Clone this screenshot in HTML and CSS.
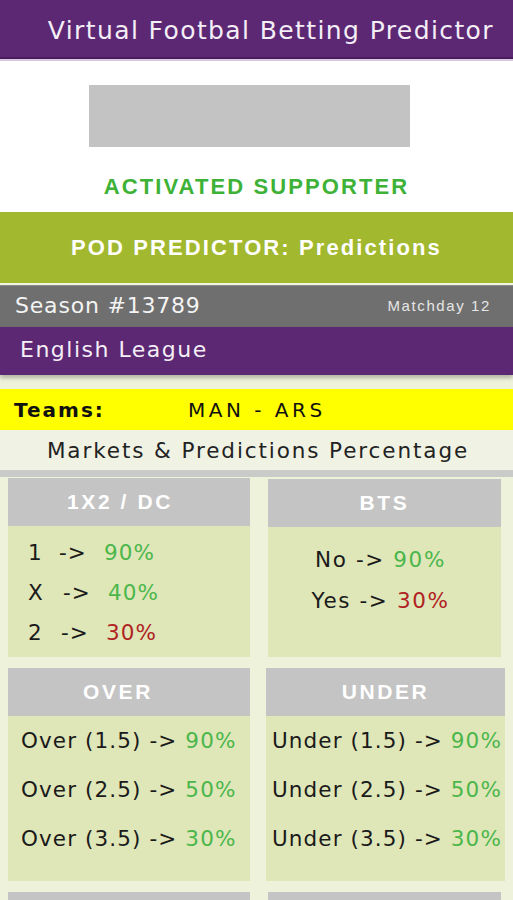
FILE: index.html
```html
<!DOCTYPE html>
<html>
<head>
<meta charset="utf-8">
<link rel="stylesheet" href="styles.css">
</head>
<body>
<header class="topbar"><h1 class="title">Virtual Footbal Betting Predictor</h1></header>
<section class="promo">
  <div class="banner"></div>
  <p class="status">ACTIVATED SUPPORTER</p>
</section>
<div class="podbar">POD PREDICTOR: Predictions</div>
<div class="season"><span class="season-name">Season #13789</span><span class="matchday">Matchday 12</span></div>
<div class="league">English League</div>
<div class="teams"><span class="teams-label">Teams:</span><span class="teams-value">MAN - ARS</span></div>
<div class="markets">Markets &amp; Predictions Percentage</div>
<div class="divider"></div>
<main class="grid">
  <div class="card card-1x2">
    <div class="card-head">1X2 / DC</div>
    <div class="card-body rows-1x2">
      <div class="row r1"><span class="k">1</span><span class="arrow">-&gt;</span><span class="good">90%</span></div>
      <div class="row r2"><span class="k">X</span><span class="arrow">-&gt;</span><span class="good">40%</span></div>
      <div class="row r3"><span class="k">2</span><span class="arrow">-&gt;</span><span class="bad">30%</span></div>
    </div>
  </div>
  <div class="card card-bts">
    <div class="card-head">BTS</div>
    <div class="card-body rows-bts">
      <div class="row">No -&gt; <span class="good">90%</span></div>
      <div class="row">Yes -&gt; <span class="bad">30%</span></div>
    </div>
  </div>
  <div class="card card-over">
    <div class="card-head">OVER</div>
    <div class="card-body rows-ou">
      <div class="row">Over (1.5) -&gt; <span class="good">90%</span></div>
      <div class="row">Over (2.5) -&gt; <span class="good">50%</span></div>
      <div class="row">Over (3.5) -&gt; <span class="good">30%</span></div>
    </div>
  </div>
  <div class="card card-under">
    <div class="card-head">UNDER</div>
    <div class="card-body rows-ou">
      <div class="row">Under (1.5) -&gt; <span class="good">90%</span></div>
      <div class="row">Under (2.5) -&gt; <span class="good">50%</span></div>
      <div class="row">Under (3.5) -&gt; <span class="good">30%</span></div>
    </div>
  </div>
  <div class="card card-next"><div class="card-head"></div></div>
  <div class="card card-next"><div class="card-head"></div></div>
</main>
</body>
</html>
```
FILE: styles.css
```css
* { box-sizing: border-box; }
html, body { margin: 0; padding: 0; }
body {
  width: 513px;
  background: #eef2da;
  font-family: "Liberation Sans", Arial, sans-serif;
  overflow: hidden;
}
.topbar {
  height: 59px;
  background: #5c2874;
  border-bottom: 2px solid #4a1a5e;
  box-shadow: 0 2px 0 #d9c8e0;
  display: flex;
  align-items: center;
  justify-content: flex-end;
  padding-right: 19px;
}
.title {
  margin: 0;
  color: #f4eef6;
  font-family: "DejaVu Sans", sans-serif;
  font-weight: 400;
  font-size: 25px;
  letter-spacing: 1.4px;
  white-space: nowrap;
  padding-top: 3px;
}
.promo {
  background: #fff;
  height: 151px;
  margin-top: 2px;
  display: flex;
  flex-direction: column;
  align-items: center;
  padding-top: 24px;
}
.banner {
  width: 321px;
  height: 62px;
  background: #c3c3c3;
  margin-left: -14px;
}
.status {
  margin: 27px 0 0;
  color: #3db236;
  font-weight: 700;
  font-size: 22px;
  letter-spacing: 2.1px;
  white-space: nowrap;
}
.podbar {
  height: 73px;
  background: #a2b82e;
  color: #fff;
  font-weight: 700;
  font-size: 22px;
  letter-spacing: 2.1px;
  display: flex;
  align-items: center;
  justify-content: center;
  border-bottom: 2px solid #f2f5e0;
  white-space: nowrap;
}
.season {
  height: 42px;
  background: #6f6f6f;
  border-top: 1px solid #8a8a8a;
  color: #f4f4f4;
  display: flex;
  align-items: center;
  justify-content: space-between;
  padding: 0 22px 2px 15px;
}
.season-name {
  font-family: "DejaVu Sans", sans-serif;
  font-size: 22px;
  letter-spacing: 0.8px;
}
.matchday {
  font-size: 15px;
  letter-spacing: 1.6px;
  color: #e6e6e6;
}
.league {
  height: 48px;
  background: #5c2874;
  color: #f4eef6;
  font-family: "DejaVu Sans", sans-serif;
  font-size: 22px;
  letter-spacing: 1.5px;
  display: flex;
  align-items: center;
  padding: 0 0 4px 20px;
  box-shadow: 0 3px 4px rgba(0, 0, 0, 0.25);
}
.teams {
  margin-top: 14px;
  height: 41px;
  background: #ffff00;
  display: flex;
  align-items: center;
  padding-left: 14px;
  color: #111;
  font-family: "DejaVu Sans", sans-serif;
}
.teams-label {
  font-weight: 700;
  font-size: 20px;
  letter-spacing: 2px;
  width: 174px;
}
.teams-value {
  font-size: 20px;
  letter-spacing: 3.5px;
}
.markets {
  height: 40px;
  background: #f0f2e4;
  display: flex;
  align-items: center;
  justify-content: center;
  font-family: "DejaVu Sans", sans-serif;
  font-size: 21.5px;
  letter-spacing: 1.9px;
  color: #222;
  padding-left: 3px;
  white-space: nowrap;
}
.divider {
  height: 7px;
  background: #c9cbc8;
}
.grid {
  display: grid;
  grid-template-columns: 242px 233px;
  column-gap: 18px;
  row-gap: 11px;
  padding: 1px 0 0 8px;
}
.card-head {
  height: 48px;
  background: #c4c4c4;
  color: #fff;
  font-weight: 700;
  font-size: 21px;
  letter-spacing: 2.6px;
  display: flex;
  align-items: center;
  justify-content: center;
}
.card-body {
  background: #dfe6b8;
  color: #1a1a1a;
  font-family: "DejaVu Sans", sans-serif;
  font-size: 21.5px;
  letter-spacing: 1.1px;
  white-space: nowrap;
}
.good { color: #4bb74b; }
.bad { color: #b02323; }
.rows-1x2 {
  height: 131px;
  padding: 14px 0 0 20px;
}
.card-1x2 .card-head { padding-right: 18px; }
.rows-1x2 .row { display: flex; height: 40px; }
.rows-1x2 .k { width: 31px; }
.rows-1x2 .arrow { width: 45px; }
.rows-1x2 .r2 .k { width: 35px; }
.rows-1x2 .r3 .k { width: 33px; }
.rows-1x2 .r3 { height: 37px; }
.card-bts { margin-top: 1px; }
.rows-bts {
  height: 130px;
  padding-top: 20px;
  text-align: center;
  letter-spacing: 1.6px;
}
.rows-bts .row { height: 41px; padding-right: 8px; }
.rows-ou {
  height: 165px;
  padding: 12px 0 0 13px;
}
.rows-ou .row { height: 49px; }
.card-over .card-head { padding-right: 22px; }
.card-under { margin-left: -2px; width: 239px; }
.card-under .rows-ou { padding-left: 6px; }
.card-next .card-head { height: 30px; }
```
